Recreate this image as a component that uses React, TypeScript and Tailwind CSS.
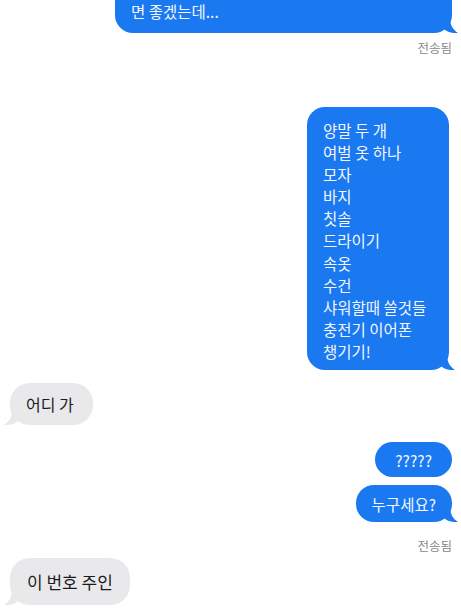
import React from 'react';

const font = { fontFamily: '"Noto Sans CJK KR", "Noto Sans", sans-serif' };

function Tail({ side, color }: { side: 'left' | 'right'; color: string }) {
  // iOS style bubble tail
  return (
    <svg
      width="14"
      height="16"
      viewBox="0 0 14 16"
      className={side === 'right' ? 'absolute -right-[6px] bottom-0' : 'absolute -left-[6px] bottom-0 -scale-x-100'}
    >
      <path d="M0 0 L6 0 C6 7 8 12 14 16 C8 16.5 3 15 0 12 Z" fill={color} />
    </svg>
  );
}

function Sent({ children }: { children: React.ReactNode }) {
  return (
    <div className="relative">
      <div className="relative bg-[#1a78f0] text-[#f2f6ff] text-[15.5px] rounded-[18px] px-4">
        {children}
      </div>
      <Tail side="right" color="#1a78f0" />
    </div>
  );
}

function Received({ children }: { children: React.ReactNode }) {
  return (
    <div className="relative">
      <div className="relative bg-[#e9e9eb] text-[#1c1c1e] leading-[22px] rounded-[20px] px-4">
        {children}
      </div>
      <Tail side="left" color="#e9e9eb" />
    </div>
  );
}

export default function App() {
  const items = [
    '양말 두 개',
    '여벌 옷 하나',
    '모자',
    '바지',
    '칫솔',
    '드라이기',
    '속옷',
    '수건',
    '샤워할때 쓸것들',
    '충전기 이어폰',
    '챙기기!',
  ];

  return (
    <div className="w-[461px] h-[615px] overflow-hidden bg-white flex flex-col pl-[10px] pr-[9px]" style={font}>
      {/* cut off top bubble */}
      <div className="relative self-end w-[337px]">
        <div className="bg-[#1a78f0] text-[#f2f6ff] text-[15.5px] leading-[22px] rounded-b-[18px] pl-4 pt-[0px] pb-[11px]">
          면 좋겠는데...
        </div>
        <Tail side="right" color="#1a78f0" />
      </div>
      <div className="self-end mt-[7px] text-[12.5px] leading-[16px] text-[#86868b]">전송됨</div>

      {/* packing list */}
      <div className="mt-[51px] self-end mr-[3px]">
        <Sent>
          <div className="w-[110px] pt-[12px] pb-[8px] leading-[22.1px]">
            {items.map((t) => (
              <div key={t}>{t}</div>
            ))}
          </div>
        </Sent>
      </div>

      <div className="mt-[13px] self-start">
        <Received>
          <div className="py-[10px] pr-[3px] text-[16px]">어디 가</div>
        </Received>
      </div>

      <div className="mt-[17px] self-end">
        <div className="bg-[#1a78f0] text-[#f2f6ff] text-[15.5px] leading-[22px] rounded-[18px] px-[20px] py-[6.5px]">
          ?????
        </div>
      </div>
      <div className="mt-[8px] self-end">
        <Sent>
          <div className="py-[7.5px] leading-[22px]">누구세요?</div>
        </Sent>
      </div>
      <div className="self-end mt-[16px] text-[12.5px] leading-[16px] text-[#86868b]">전송됨</div>

      <div className="mt-[4px] self-start">
        <Received>
          <div className="py-[12.5px] pl-[1px] pr-[1px] text-[17px]">이 번호 주인</div>
        </Received>
      </div>
    </div>
  );
}
